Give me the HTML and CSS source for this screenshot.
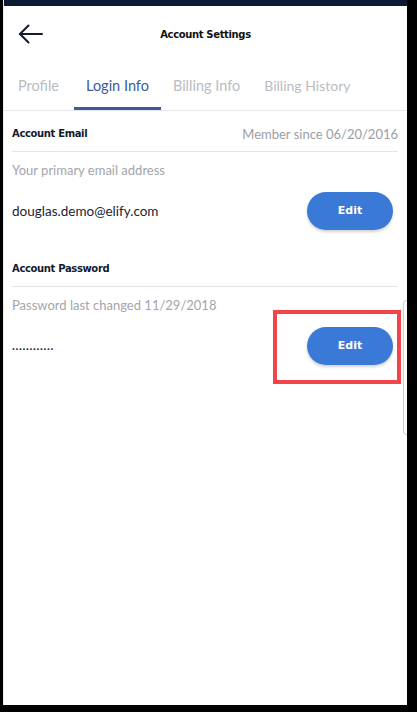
FILE: index.html
```html
<!DOCTYPE html>
<html lang="en">
<head>
<meta charset="utf-8">
<title>Account Settings</title>
<link rel="stylesheet" href="styles.css">
</head>
<body>
<div class="device">
  <div class="screen">
    <div class="statusbar"></div>
    <header class="header">
      <button class="back" aria-label="Back">
        <svg width="26" height="20" viewBox="0 0 26 20" fill="none" stroke="#141c2e" stroke-width="2" stroke-linecap="round" stroke-linejoin="round">
          <path d="M24 10H2"/>
          <path d="M10.5 1.5L2 10l8.5 8.5"/>
        </svg>
      </button>
      <h1 class="title">Account Settings</h1>
    </header>
    <nav class="tabs">
      <span class="tab">Profile</span>
      <span class="tab active">Login Info</span>
      <span class="tab">Billing Info</span>
      <span class="tab">Billing History</span>
    </nav>
    <main class="content">
      <section class="section">
        <div class="sec-head">
          <span class="sec-title">Account Email</span>
          <span class="sec-meta">Member since 06/20/2016</span>
        </div>
        <div class="sub">Your primary email address</div>
        <div class="row">
          <span class="value">douglas.demo@elify.com</span>
          <button class="edit">Edit</button>
        </div>
      </section>
      <section class="section second">
        <div class="sec-head">
          <span class="sec-title">Account Password</span>
        </div>
        <div class="sub">Password last changed 11/29/2018</div>
        <div class="row">
          <span class="value dots">............</span>
          <button class="edit">Edit</button>
        </div>
      </section>
    </main>
    <div class="highlight"></div>
    <div class="scrollhint"></div>
  </div>
</div>
</body>
</html>
```

FILE: styles.css
```css
* { box-sizing: border-box; }

html, body {
  margin: 0;
  padding: 0;
  background: #000;
  width: 417px;
  height: 712px;
  overflow: hidden;
}

.device {
  padding-left: 3px;
  width: 417px;
  height: 712px;
}

.screen {
  position: relative;
  width: 404px;
  height: 705px;
  background: #fff;
  display: flex;
  flex-direction: column;
  border-left: 1px solid #e8e8e8;
  font-family: Lato, "Noto Sans", sans-serif;
}

.statusbar {
  height: 6px;
  background: #0c1a34;
  flex: none;
}

.header {
  height: 56px;
  flex: none;
  display: flex;
  align-items: center;
  position: relative;
}

.back {
  border: 0;
  background: none;
  padding: 0;
  margin-left: 14px;
  display: flex;
  align-items: center;
}

.title {
  position: absolute;
  left: 0;
  right: 0;
  top: 0;
  bottom: 0;
  margin: 0;
  display: flex;
  align-items: center;
  justify-content: center;
  font-family: "DejaVu Sans", sans-serif;
  font-weight: bold;
  font-size: 10px;
  letter-spacing: -0.35px;
  color: #111;
  pointer-events: none;
}

.tabs {
  flex: none;
  display: flex;
  padding-left: 2px;
  height: 49px;
  border-bottom: 1px solid #e6e6e9;
}

.tab {
  padding: 2px 12px 0;
  height: 48px;
  display: flex;
  align-items: center;
  font-size: 14.5px;
  color: #b9bcc3;
  border-bottom: 3px solid transparent;
}

.tab:nth-child(2) { margin-left: 3px; }
.tab:nth-child(4) { font-size: 14px; }

.tab.active {
  color: #3c5b97;
  border-bottom-color: #3c5b97;
}

.content {
  padding: 0 9px 0 8px;
  display: flex;
  flex-direction: column;
}

.section.second {
  margin-top: 16px;
}

.sec-head {
  height: 41px;
  padding-top: 5px;
  display: flex;
  align-items: center;
  justify-content: space-between;
  border-bottom: 1px solid #e4e4e6;
}

.sec-title {
  font-family: "DejaVu Sans", sans-serif;
  font-weight: bold;
  font-size: 10px;
  letter-spacing: -0.35px;
  color: #121a2c;
}

.sec-meta {
  font-size: 13px;
  color: #9b9ea4;
}

.sub {
  margin-top: 9px;
  line-height: 18px;
  font-size: 13px;
  color: #a3a5aa;
}

.row {
  margin-top: 12px;
  height: 39px;
  display: flex;
  align-items: center;
  justify-content: space-between;
}

.value {
  font-size: 13.5px;
  color: #1d2333;
}

.value.dots {
  font-size: 12px;
  font-weight: bold;
  letter-spacing: 0.65px;
  color: #1d2333;
  margin-top: -1px;
}

.edit {
  width: 86px;
  height: 38px;
  margin-right: 5px;
  border: 0;
  border-radius: 19px;
  background: #3b79d6;
  color: #fff;
  font-family: "DejaVu Sans", sans-serif;
  font-weight: bold;
  font-size: 11px;
  box-shadow: 0 2px 3px rgba(0, 0, 0, 0.18);
}

.highlight {
  position: absolute;
  left: 269px;
  top: 310px;
  width: 128px;
  height: 74px;
  border: 4px solid #f2454a;
}

.scrollhint {
  position: absolute;
  right: 0;
  top: 300px;
  width: 4px;
  height: 135px;
  border: 1px solid #cfd0d3;
  border-right: 0;
  border-radius: 4px 0 0 4px;
}
```
